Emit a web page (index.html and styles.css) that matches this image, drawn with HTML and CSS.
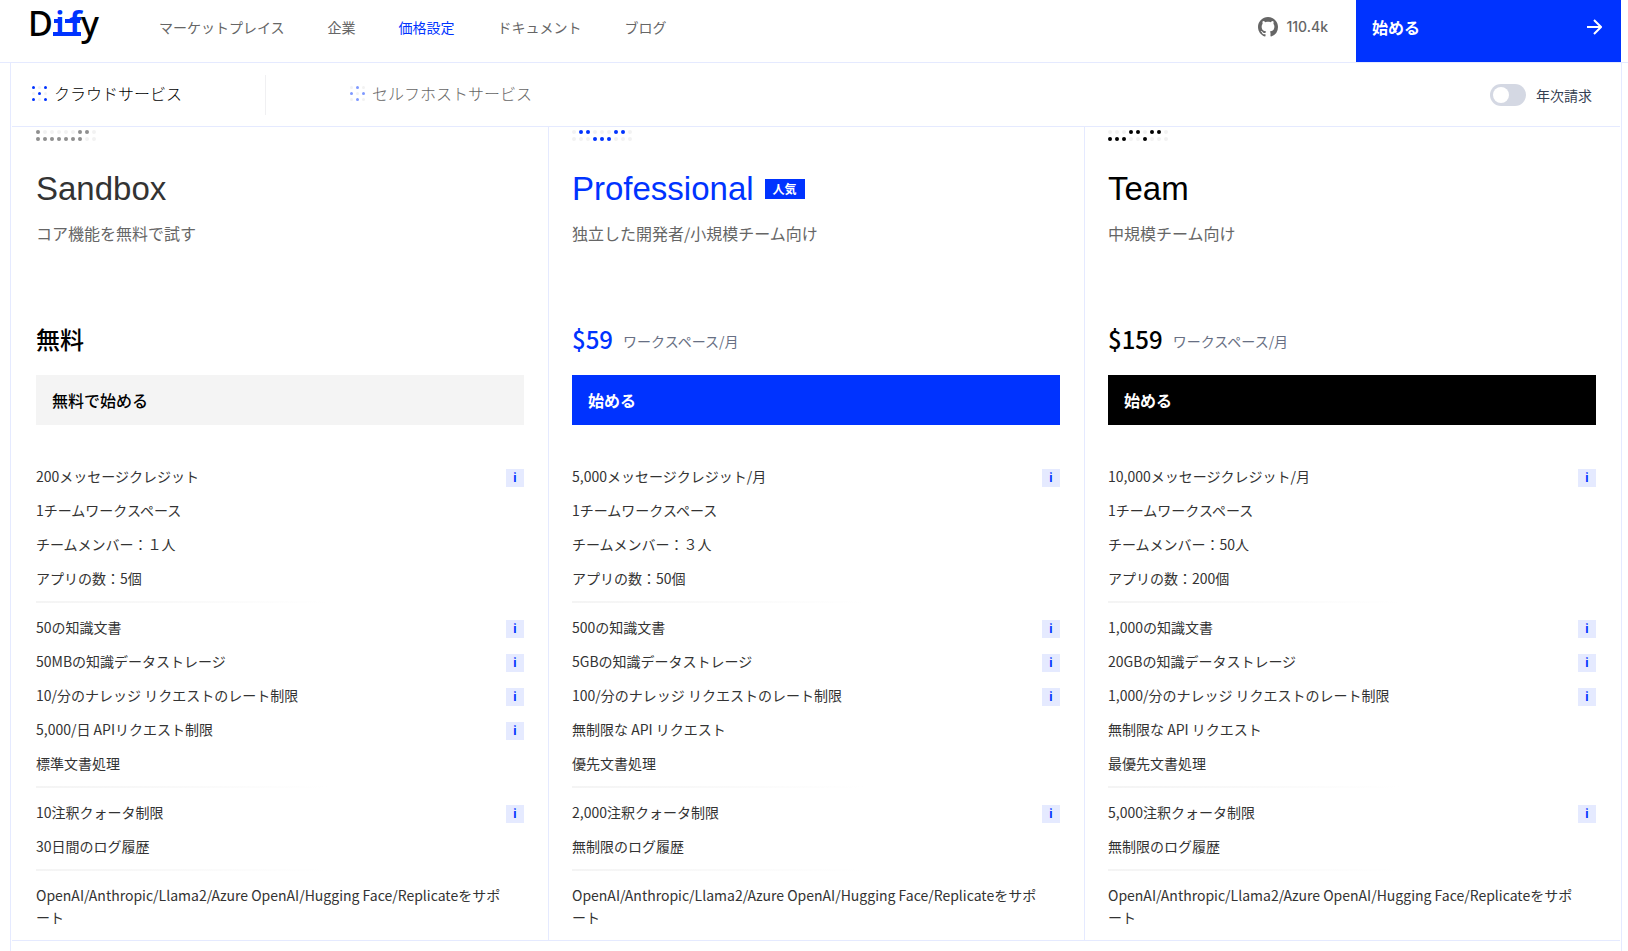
FILE: index.html
```html
<!DOCTYPE html>
<html lang="ja">
<head>
<meta charset="utf-8">
<title>Dify 価格設定</title>
<link rel="stylesheet" href="styles.css">
</head>
<body>
<header class="header">
  <a class="logo" href="#" aria-label="Dify">
    <svg width="80" height="54" viewBox="0 0 80 54">
      <text class="logo-text" x="4" y="36">D</text>
      <text class="logo-text logo-blue" x="31" y="36">i</text>
      <text class="logo-text logo-blue" x="45" y="36">f</text>
      <path class="logo-bar" d="M30 19h8v4h-8zM41 19h15v4H41zM29 32h28v4H29z"/>
      <text class="logo-text" x="57" y="36">y</text>
    </svg>
  </a>
  <nav class="nav">
    <a href="#">マーケットプレイス</a>
    <a href="#">企業</a>
    <a class="active" href="#">価格設定</a>
    <a href="#">ドキュメント</a>
    <a href="#">ブログ</a>
  </nav>
  <a class="github" href="#">
    <svg width="20" height="20" viewBox="0 0 16 16" fill="currentColor"><path d="M8 0C3.58 0 0 3.58 0 8c0 3.54 2.29 6.53 5.47 7.59.4.07.55-.17.55-.38 0-.19-.01-.82-.01-1.49-2.01.37-2.53-.49-2.69-.94-.09-.23-.48-.94-.82-1.13-.28-.15-.68-.52-.01-.53.63-.01 1.08.58 1.23.82.72 1.21 1.87.87 2.33.66.07-.52.28-.87.51-1.07-1.78-.2-3.64-.89-3.64-3.95 0-.87.31-1.59.82-2.15-.08-.2-.36-1.02.08-2.12 0 0 .67-.21 2.2.82.64-.18 1.32-.27 2-.27s1.36.09 2 .27c1.53-1.04 2.2-.82 2.2-.82.44 1.1.16 1.92.08 2.12.51.56.82 1.27.82 2.15 0 3.07-1.87 3.75-3.65 3.95.29.25.54.73.54 1.48 0 1.07-.01 1.93-.01 2.2 0 .21.15.46.55.38A8.01 8.01 0 0 0 16 8c0-4.42-3.58-8-8-8z"/></svg>
    <span>110.4k</span>
  </a>
  <a class="start" href="#">
    <span>始める</span>
    <svg width="16" height="16" viewBox="0 0 16 16" fill="none" stroke="currentColor" stroke-width="2"><path d="M1 8h13M8 1l7 7-7 7"/></svg>
  </a>
</header>
<main class="page">
  <div class="bar">
    <button class="tab tab-on" type="button">
      <svg width="15" height="15" viewBox="0 0 15 15"><g class="dot-off"><circle cx="7.5" cy="1.5" r="1.5"/><circle cx="1.5" cy="7.5" r="1.5"/><circle cx="13.5" cy="7.5" r="1.5"/><circle cx="7.5" cy="13.5" r="1.5"/></g><g class="dot-blue"><circle cx="1.5" cy="1.5" r="1.5"/><circle cx="13.5" cy="1.5" r="1.5"/><circle cx="7.5" cy="7.5" r="1.5"/><circle cx="1.5" cy="13.5" r="1.5"/><circle cx="13.5" cy="13.5" r="1.5"/></g></svg>
      <span>クラウドサービス</span>
    </button>
    <span class="tab-divider"></span>
    <button class="tab" type="button">
      <svg width="15" height="15" viewBox="0 0 15 15"><g class="dot-soft"><circle cx="7.5" cy="1.5" r="1.5"/><circle cx="1.5" cy="7.5" r="1.5"/><circle cx="13.5" cy="7.5" r="1.5"/><circle cx="7.5" cy="13.5" r="1.5"/></g><g class="dot-off"><circle cx="1.5" cy="1.5" r="1.5"/><circle cx="13.5" cy="1.5" r="1.5"/><circle cx="7.5" cy="7.5" r="1.5"/><circle cx="1.5" cy="13.5" r="1.5"/><circle cx="13.5" cy="13.5" r="1.5"/></g></svg>
      <span>セルフホストサービス</span>
    </button>
    <label class="billing"><input class="switch" type="checkbox" role="switch"><span>年次請求</span></label>
  </div>
  <div class="plans">
    <section class="plan sandbox">
      <svg class="dots" width="60" height="11" viewBox="0 0 60 11"><path class="track" d="M2 2h57M2 9h57"/><path class="lit" d="M2 2h1M44 2h8M2 9h43"/></svg>
      <div class="title"><h2>Sandbox</h2></div>
      <p class="desc">コア機能を無料で試す</p>
      <div class="price"><strong>無料</strong></div>
      <button class="cta" type="button">無料で始める</button>
      <ul class="features">
        <li>200メッセージクレジット<button class="info" type="button">i</button></li>
        <li>1チームワークスペース</li>
        <li>チームメンバー：１人</li>
        <li>アプリの数：5個</li>
      </ul>
      <ul class="features">
        <li>50の知識文書<button class="info" type="button">i</button></li>
        <li>50MBの知識データストレージ<button class="info" type="button">i</button></li>
        <li>10/分のナレッジ リクエストのレート制限<button class="info" type="button">i</button></li>
        <li>5,000/日 APIリクエスト制限<button class="info" type="button">i</button></li>
        <li>標準文書処理</li>
      </ul>
      <ul class="features">
        <li>10注釈クォータ制限<button class="info" type="button">i</button></li>
        <li>30日間のログ履歴</li>
      </ul>
      <ul class="features">
        <li>OpenAI/Anthropic/Llama2/Azure OpenAI/Hugging Face/Replicateをサポート</li>
      </ul>
    </section>
    <section class="plan professional">
      <svg class="dots" width="60" height="11" viewBox="0 0 60 11"><path class="track" d="M2 2h57M2 9h57"/><path class="lit" d="M9 2h8M44 2h8M23 9h15"/></svg>
      <div class="title"><h2>Professional</h2><span class="badge">人気</span></div>
      <p class="desc">独立した開発者/小規模チーム向け</p>
      <div class="price"><strong>$59</strong><span>ワークスペース/月</span></div>
      <button class="cta" type="button">始める</button>
      <ul class="features">
        <li>5,000メッセージクレジット/月<button class="info" type="button">i</button></li>
        <li>1チームワークスペース</li>
        <li>チームメンバー：３人</li>
        <li>アプリの数：50個</li>
      </ul>
      <ul class="features">
        <li>500の知識文書<button class="info" type="button">i</button></li>
        <li>5GBの知識データストレージ<button class="info" type="button">i</button></li>
        <li>100/分のナレッジ リクエストのレート制限<button class="info" type="button">i</button></li>
        <li>無制限な API リクエスト</li>
        <li>優先文書処理</li>
      </ul>
      <ul class="features">
        <li>2,000注釈クォータ制限<button class="info" type="button">i</button></li>
        <li>無制限のログ履歴</li>
      </ul>
      <ul class="features">
        <li>OpenAI/Anthropic/Llama2/Azure OpenAI/Hugging Face/Replicateをサポート</li>
      </ul>
    </section>
    <section class="plan team">
      <svg class="dots" width="60" height="11" viewBox="0 0 60 11"><path class="track" d="M2 2h57M2 9h57"/><path class="lit" d="M23 2h8M44 2h8M2 9h15M37 9h1"/></svg>
      <div class="title"><h2>Team</h2></div>
      <p class="desc">中規模チーム向け</p>
      <div class="price"><strong>$159</strong><span>ワークスペース/月</span></div>
      <button class="cta" type="button">始める</button>
      <ul class="features">
        <li>10,000メッセージクレジット/月<button class="info" type="button">i</button></li>
        <li>1チームワークスペース</li>
        <li>チームメンバー：50人</li>
        <li>アプリの数：200個</li>
      </ul>
      <ul class="features">
        <li>1,000の知識文書<button class="info" type="button">i</button></li>
        <li>20GBの知識データストレージ<button class="info" type="button">i</button></li>
        <li>1,000/分のナレッジ リクエストのレート制限<button class="info" type="button">i</button></li>
        <li>無制限な API リクエスト</li>
        <li>最優先文書処理</li>
      </ul>
      <ul class="features">
        <li>5,000注釈クォータ制限<button class="info" type="button">i</button></li>
        <li>無制限のログ履歴</li>
      </ul>
      <ul class="features">
        <li>OpenAI/Anthropic/Llama2/Azure OpenAI/Hugging Face/Replicateをサポート</li>
      </ul>
    </section>
  </div>
</main>
</body>
</html>
```
FILE: styles.css
```css
* { box-sizing: border-box; }

body {
  margin: 0;
  min-height: 100vh;
  display: flex;
  flex-direction: column;
  background: #fff;
  color: #000;
  font-family: "Noto Sans CJK JP", sans-serif;
  font-size: 14px;
  line-height: 22px;
}

a { color: inherit; text-decoration: none; }
button { font: inherit; border: 0; padding: 0; background: none; text-align: left; cursor: pointer; }
h2, p, ul { margin: 0; padding: 0; }

.header {
  display: flex;
  height: 63px;
  padding: 0 7px 0 24px;
  border-bottom: 1px solid #e5eaff;
}
.logo, .nav, .github { display: flex; align-items: center; height: 54px; }
.logo-text { font: 500 34px "Noto Sans", sans-serif; }
.logo-blue { font-weight: 600; }
.logo-blue, .logo-bar { fill: #0033ff; }
.nav { margin-left: 55px; gap: 43px; color: #666; }
.nav .active { color: #0033ff; }
.github {
  margin-left: auto;
  gap: 8px;
  color: #666;
  font-family: Inter, sans-serif;
  font-weight: 500;
}
.start {
  display: flex;
  align-items: center;
  justify-content: space-between;
  width: 265px;
  height: 62px;
  margin-left: 28px;
  padding: 0 19px 8px 16px;
  background: #0033ff;
  color: #fff;
  font-size: 16px;
  font-weight: 700;
}

.page {
  flex: 1;
  margin: 0 6px 0 10px;
  padding: 0 1px;
  border: solid #e5eaff;
  border-width: 0 1px;
}
.bar {
  display: flex;
  align-items: center;
  height: 64px;
  padding: 0 28px 0 20px;
  border-bottom: 1px solid #e5eaff;
}
.tab {
  display: flex;
  align-items: center;
  gap: 7px;
  padding-bottom: 3px;
  color: #666;
  font-size: 16px;
  font-weight: 300;
}
.tab-on { color: #000; }
.tab-divider { width: 1px; height: 40px; margin: 0 84px 0 83px; background: #f0f0f2; }
.dot-off { fill: #f2f2f2; }
.dot-blue { fill: #0033ff; }
.dot-soft { fill: #7f99ff; }
.billing { display: flex; align-items: center; gap: 10px; margin-left: auto; color: #354052; }
.switch {
  appearance: none;
  width: 36px;
  height: 22px;
  margin: 0;
  padding: 3px;
  border-radius: 11px;
  background: #d4d8e3;
}
.switch::before {
  content: "";
  display: block;
  width: 16px;
  height: 16px;
  border-radius: 8px;
  background: #fff;
}
.switch:checked { background: #0033ff; }
.switch:checked::before { margin-left: auto; }

.plans {
  display: grid;
  grid-template-columns: repeat(3, 1fr);
  border-bottom: 1px solid #e5eaff;
}
.plan { padding: 3px 24px 12px; }
.plan + .plan { padding-left: 23px; border-left: 1px solid #e5eaff; }
.dots { display: block; fill: none; stroke-width: 4; stroke-linecap: round; }
.track, .lit { stroke-dasharray: 0 7; }
.track { stroke: #f2f2f2; }
.lit { stroke: currentColor; }
.sandbox .dots { color: #8f8f8f; }

.title { display: flex; align-items: center; gap: 11px; height: 40px; margin-top: 28px; }
h2 { font: 400 33px/40px "Liberation Sans", Arial, sans-serif; }
.sandbox h2 { color: #333; }
.badge {
  padding: 0 8px;
  background: #0033ff;
  color: #fff;
  font-size: 12px;
  font-weight: 700;
  line-height: 20px;
}
.desc { margin-top: 12px; color: #666; font-size: 16px; line-height: 24px; }
.price { display: flex; align-items: center; gap: 10px; height: 36px; margin-top: 76px; color: #676f83; }
.price span { padding-top: 4px; }
.price strong { color: #000; font-size: 24px; font-weight: 500; line-height: 36px; }
.professional h2, .professional .price strong, .professional .dots { color: #0033ff; }
.cta {
  display: block;
  width: 100%;
  height: 50px;
  margin: 18px 0 40px;
  padding: 0 16px;
  background: #000;
  color: #fff;
  font-size: 16px;
  font-weight: 700;
}
.sandbox .cta { background: #f4f4f4; color: #000; font-weight: 500; }
.professional .cta { background: #0033ff; }

.features { display: flex; flex-direction: column; gap: 12px; list-style: none; color: #333; }
.features + .features::before {
  content: "";
  height: 2px;
  margin: 12px 0 1px;
  background: linear-gradient(90deg, #f4f4f4, #fff 60%);
}
.features li { display: flex; justify-content: space-between; }
.features li:only-child { padding-right: 16px; }
.info {
  flex: none;
  width: 18px;
  height: 18px;
  margin-top: 4px;
  background: #e5eaff;
  color: #0033ff;
  font: 700 12px/16px Inter, sans-serif;
  text-align: center;
}
```
